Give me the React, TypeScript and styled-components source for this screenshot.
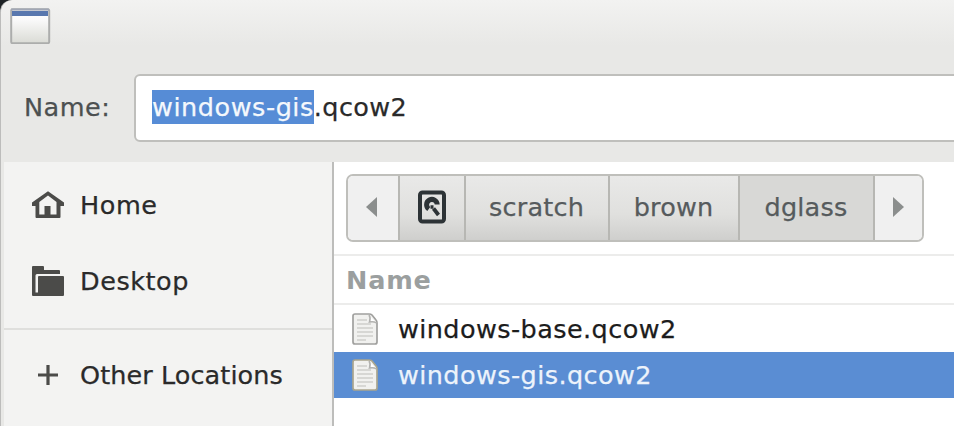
import React from "react";
import styled, { createGlobalStyle } from "styled-components";

const GlobalStyle = createGlobalStyle`
  * { box-sizing: border-box; }
  body { margin: 0; overflow: hidden; background: #1f2326; }
`;

const Dialog = styled.div`
  width: 954px;
  height: 426px;
  overflow: hidden;
  display: flex;
  flex-direction: column;
  border-left: 1px solid #bcbcbb;
  border-top-left-radius: 12px;
  background: linear-gradient(#f2f2f1 0, #e8e8e6 46px, #e8e8e6 100%);
  font-family: "DejaVu Sans", sans-serif;
  font-size: 25.5px;
  letter-spacing: 0.5px;
  -webkit-text-stroke: 0.25px currentColor;
  line-height: 32px;
  white-space: nowrap;
  color: #2a2a2a;
`;

const TitleBar = styled.header`
  height: 74px;
  flex: none;
  padding: 8px 0 0 9px;
`;

const NameRow = styled.div`
  height: 88px;
  flex: none;
  display: flex;
  align-items: flex-start;
`;

const NameLabel = styled.label`
  width: 133px;
  padding: 17px 0 0 23px;
  color: #4c5051;
`;

const Entry = styled.div`
  flex: 1;
  height: 68px;
  margin-right: -10px;
  padding: 14px 0 0 16px;
  border: 2px solid #bfbfbc;
  border-radius: 6px;
  background: #fff;
  letter-spacing: 0.4px;
`;

const Selection = styled.span`
  display: inline-block;
  height: 34px;
  line-height: 34px;
  background: #568cd6;
  color: #f4f8fc;
  letter-spacing: 0.55px;
`;

const Body = styled.div`
  flex: 1;
  display: flex;
  min-height: 0;
  margin-left: 3px;
`;

const Sidebar = styled.nav`
  width: 330px;
  flex: none;
  padding-top: 5px;
  border-right: 2px solid #bdbdbb;
  background: #f3f3f2;
`;

const Place = styled.div<{ $tight?: boolean }>`
  height: 76px;
  display: flex;
  align-items: center;
  gap: 16px;
  padding-left: 28px;
  letter-spacing: ${(p) => (p.$tight ? 0.08 : 0.55)}px;
`;

const Divider = styled.div`
  height: 2px;
  margin: 9px 0 7px;
  background: #dfdfdd;
`;

const Main = styled.main`
  flex: 1;
  min-width: 0;
  background: #fff;
`;

const PathArea = styled.div`
  height: 94px;
  padding: 12px 0 0 12px;
  border-bottom: 2px solid #ececeb;
`;

const PathBar = styled.div`
  width: 578px;
  height: 68px;
  display: flex;
  overflow: hidden;
  border: 2px solid #bfbfbb;
  border-radius: 7px;
`;

type Tone = "raised" | "active" | "flat";

const tones: Record<Tone, string> = {
  raised: "linear-gradient(#e9e9e8, #e0e0de 60%, #cfcfcd)",
  active: "#d8d8d6",
  flat: "#f0f0f0",
};

const Segment = styled.button<{ $width: number; $tone: Tone }>`
  width: ${(p) => p.$width}px;
  flex: none;
  display: flex;
  align-items: center;
  justify-content: center;
  padding: 0 1px 2px 0;
  border: 0;
  border-right: 2px solid #b7b7b3;
  box-shadow: ${(p) => (p.$tone === "raised" ? "0 2px 0 #a4a4a0" : "none")};
  background: ${(p) => tones[p.$tone]};
  color: #565b5d;
  font: inherit;
  letter-spacing: 0.2px;
  &:first-child { padding-right: 4px; }
  &:last-child { border-right: 0; padding-right: 0; }
`;

const ColumnHeader = styled.div`
  height: 49px;
  padding: 8px 0 0 12px;
  border-bottom: 2px solid #ececeb;
  color: #9b9f9f;
  font-weight: bold;
  font-size: 25.5px;
  letter-spacing: 0.8px;
  -webkit-text-stroke: 0;
`;

const FileRow = styled.div<{ $selected?: boolean }>`
  height: ${(p) => (p.$selected ? 46 : 47)}px;
  display: flex;
  align-items: center;
  gap: 18px;
  padding-left: 17px;
  letter-spacing: 0.42px;
  background: ${(p) => (p.$selected ? "#5a8dd3" : "#fff")};
  color: ${(p) => (p.$selected ? "#edf3fb" : "#1c1c1c")};
`;

const WindowIcon = () => (
  <svg width="41" height="36" viewBox="0 0 41 36" display="block">
    <defs>
      <linearGradient id="pane" x2="0" y2="1">
        <stop stopColor="#fff" />
        <stop offset=".3" stopColor="#fafafa" />
        <stop offset="1" stopColor="#dadbd5" />
      </linearGradient>
    </defs>
    <rect x="1.2" y="1.2" width="38" height="34" rx="1.5" fill="url(#pane)" stroke="#acadac" strokeWidth="2" />
    <path d="M2 3h36v5H2z" fill="#5877ae" />
    <path d="M1 1.5h38" stroke="#a1a7b5" strokeWidth="2" />
  </svg>
);

const HomeIcon = () => (
  <svg width="32" height="32" viewBox="0 0 32 32" fill="#4b4b49">
    <path
      d="M16 2.300 32 13.500V17h-3.500v11q0 1-1 1h-23q-1 0-1-1V17H0v-3.500ZM16 6.500 7.300 13v12.500h5.200V17h6v8.500h6V13Z"
      fillRule="evenodd"
    />
  </svg>
);

const FolderIcon = () => (
  <svg width="32" height="32" viewBox="0 0 32 32" fill="#4b4b49">
    <path d="M0 2q0-1 1-1h10q1 0 1 1v3h15q1 0 1 1v3H5q-1.500 0-1.500 1.500V27.500H6V31H1q-1 0-1-1Z" />
    <path d="M6 12q0-1 1-1h24q1 0 1 1v18q0 1-1 1H4v-2h2Z" />
  </svg>
);

const PlusIcon = () => (
  <svg width="32" height="32" viewBox="0 0 32 32" fill="none" stroke="#4b4b49" strokeWidth="3.2">
    <path d="M16 6v20M6 16h20" />
  </svg>
);

const DriveIcon = () => (
  <svg width="28" height="34" viewBox="0 0 28 34" fill="none" stroke="#2d3336">
    <rect x="2" y="2.500" width="24" height="29" rx="2.500" strokeWidth="4" />
    <path d="M10.800 19A5.300 5.300 0 1 1 19.200 14.500" strokeWidth="5" />
    <path d="M12.500 17h3" strokeWidth="3.500" />
    <path d="m15.500 18.500 5 6.500" strokeWidth="3.800" />
  </svg>
);

const Arrow = ({ right = false }: { right?: boolean }) => (
  <svg width="11" height="20" viewBox="0 0 11 20" fill="#8b8e8d">
    <path d={right ? "M0 0 11 10 0 20Z" : "M11 0 0 10 11 20Z"} />
  </svg>
);

const FileIcon = ({ selected = false }: { selected?: boolean }) => (
  <svg width="29" height="34" viewBox="0 0 29 34" fill="none">
    <path
      d="M4 2h14q2 0 3 1l4 5q1 1 1 3v19q0 2-2 2H4q-2 0-2-2V4q0-2 2-2Z"
      fill="#f1f1ef"
      stroke={selected ? "#aaa58e" : "#a0a09e"}
      strokeWidth="1.7"
    />
    <path d="M18 3q2 3 .5 7 4-1 7 1" fill="#fff" stroke="#b2b2b0" strokeWidth="1.500" />
    <path d="M6 8h10M6 12h14M6 16h16M6 20h16M6 24h16M6 28h9" stroke="#cececc" strokeWidth="1.500" />
  </svg>
);

export default function App() {
  return (
    <>
      <GlobalStyle />
      <Dialog>
        <TitleBar><WindowIcon /></TitleBar>
        <NameRow>
          <NameLabel>Name:</NameLabel>
          <Entry><Selection>windows-gis</Selection>.qcow2</Entry>
        </NameRow>
        <Body>
          <Sidebar>
            <Place><HomeIcon />Home</Place>
            <Place><FolderIcon />Desktop</Place>
            <Divider />
            <Place $tight><PlusIcon />Other Locations</Place>
          </Sidebar>
          <Main>
            <PathArea>
              <PathBar>
                <Segment $width={52} $tone="flat" aria-label="Back"><Arrow /></Segment>
                <Segment $width={66} $tone="raised" aria-label="Drive"><DriveIcon /></Segment>
                <Segment $width={144} $tone="raised">scratch</Segment>
                <Segment $width={130} $tone="raised">brown</Segment>
                <Segment $width={135} $tone="active">dglass</Segment>
                <Segment $width={47} $tone="flat" aria-label="Forward"><Arrow right /></Segment>
              </PathBar>
            </PathArea>
            <ColumnHeader>Name</ColumnHeader>
            <FileRow><FileIcon />windows-base.qcow2</FileRow>
            <FileRow $selected><FileIcon selected />windows-gis.qcow2</FileRow>
          </Main>
        </Body>
      </Dialog>
    </>
  );
}
